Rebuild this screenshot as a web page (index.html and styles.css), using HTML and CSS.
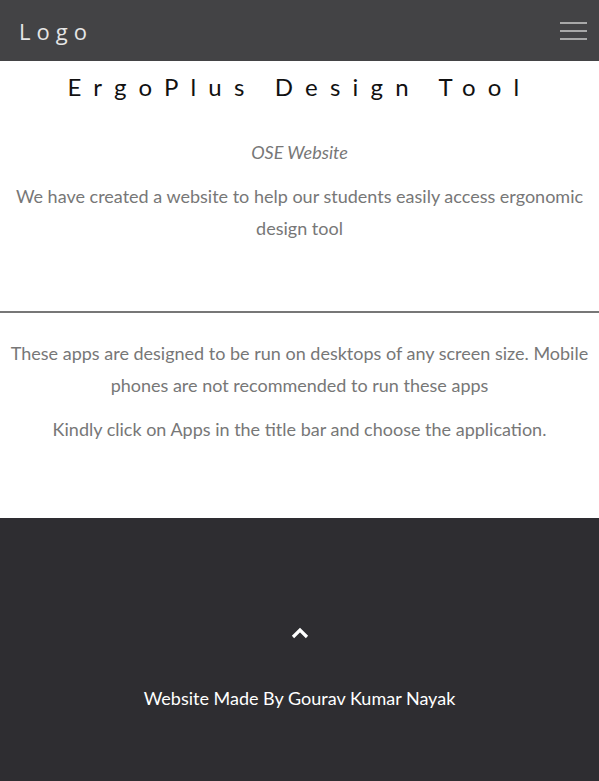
FILE: index.html
```html
<!DOCTYPE html>
<html>
<head>
<meta charset="utf-8">
<link rel="stylesheet" href="styles.css">
</head>
<body>
<header class="topbar">
  <div class="logo">Logo</div>
  <div class="burger"><span></span><span></span><span></span></div>
</header>
<main>
  <section class="intro">
    <h1 class="title">ErgoPlus Design Tool</h1>
    <p class="subtitle">OSE Website</p>
    <p class="text">We have created a website to help our students easily access ergonomic design tool</p>
  </section>
  <hr class="divider">
  <section class="info">
    <p class="text">These apps are designed to be run on desktops of any screen size. Mobile phones are not recommended to run these apps</p>
    <p class="text">Kindly click on Apps in the title bar and choose the application.</p>
  </section>
</main>
<footer class="footer">
  <svg class="up" width="18" height="12" viewBox="0 0 18 12"><path d="M2 10 L9 3 L16 10" fill="none" stroke="#fff" stroke-width="3.2"/></svg>
  <p class="credit">Website Made By Gourav Kumar Nayak</p>
</footer>
</body>
</html>
```
FILE: styles.css
```css
* { box-sizing: border-box; }
html, body { margin: 0; padding: 0; }
body { font-family: Lato, "Open Sans", sans-serif; background: #fff; }
.topbar {
  height: 61px;
  background: #434345;
  display: flex;
  align-items: center;
  justify-content: space-between;
  padding: 0 12px 0 19px;
}
.logo {
  color: #e6e6e6;
  font-family: "Open Sans", Lato, sans-serif;
  font-size: 22px;
  letter-spacing: 6px;
}
.burger { display: flex; flex-direction: column; gap: 5.5px; width: 27px; margin-top: 1px; }
.burger span { display: block; height: 2.5px; background: #a8a8a8; }
.intro { text-align: center; padding: 0 14px 67px; }
.title {
  margin: 0;
  padding-top: 11px;
  font-weight: 400;
  font-size: 24px;
  line-height: 30px;
  letter-spacing: 12.2px;
  color: #111;
}
.subtitle {
  margin: 34px 0 0;
  font-style: italic;
  font-size: 18px;
  line-height: 32px;
  color: #777;
}
.text {
  margin: 12px 0 0;
  font-size: 18px;
  line-height: 32px;
  color: #777;
}
.divider { margin: 0; border: 0; border-top: 2px solid #777; }
.info { text-align: center; padding: 24px 6px 73px; }
.info .text:first-child { margin-top: 0; }
.footer {
  background: #2e2d31;
  height: 263px;
  display: flex;
  flex-direction: column;
  align-items: center;
  padding-top: 109px;
}
.up { display: block; }
.credit {
  margin: 43px 0 0;
  color: #fff;
  font-size: 18px;
  line-height: 32px;
}
```
